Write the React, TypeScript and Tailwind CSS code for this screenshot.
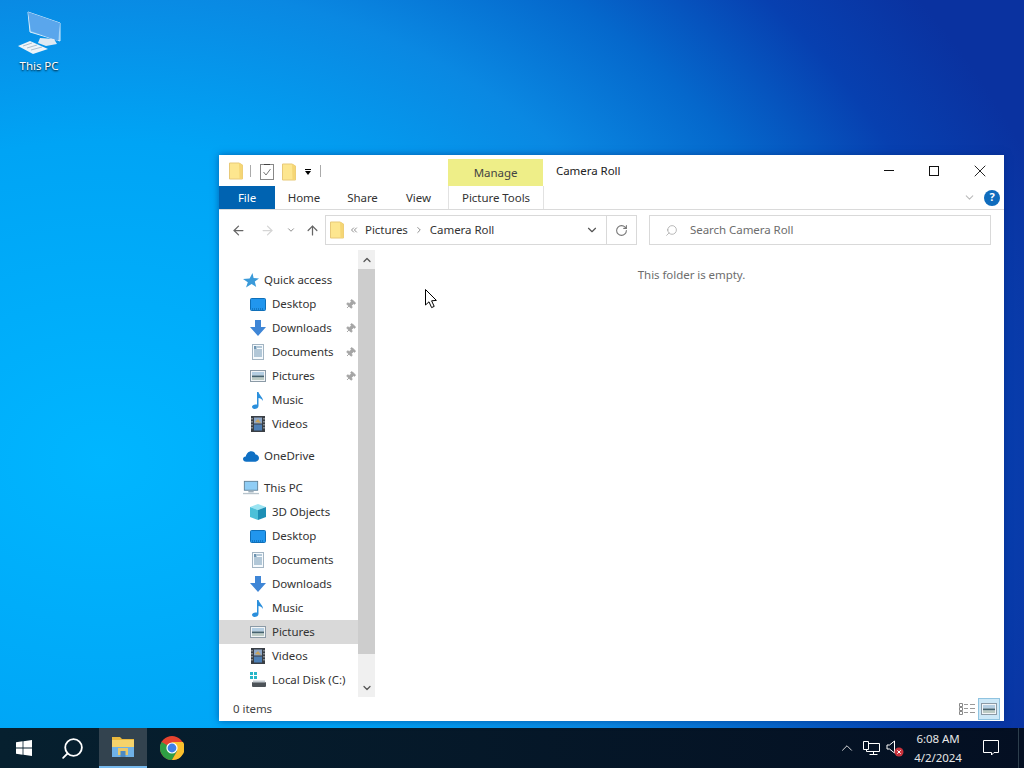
import React from "react";
import { ArrowLeft, ArrowRight, ArrowUp, ChevronDown, ChevronUp, ChevronsLeft, ChevronRight, RotateCw, Search, X, Pin } from "lucide-react";

// Small folder used in the title bar and the address bar
function FolderPage() {
    return (
        <svg width="16" height="18" viewBox="0 0 16 18">
            <path d="M1.5 1 H11 L14.5 3 V17 H1.5 Z" fill="#fde68f" stroke="#e8c978" />
            <path d="M11 1 L14.5 3 V17 H11.5 Z" fill="#f5d675" />
        </svg>
    );
}

function PropertiesIcon() {
    return (
        <svg width="14" height="16" viewBox="0 0 14 16">
            <rect x="0.5" y="0.5" width="13" height="15" fill="#fff" stroke="#888" />
            <path d="M3.5 8 L6 11 L10.5 5" fill="none" stroke="#777" />
            <path d="M4 0.5 H10" stroke="#444" />
        </svg>
    );
}

function DesktopIcon() {
    return (
        <svg width="16" height="13" viewBox="0 0 16 13">
            <rect x="0.5" y="0.5" width="15" height="12" rx="1" fill="#2196ee" stroke="#0f6fb8" />
            <path d="M2 11 H14" stroke="#0b5c9c" strokeDasharray="1 1" />
        </svg>
    );
}

function DownloadIcon() {
    return (
        <svg width="16" height="16" viewBox="0 0 16 16">
            <path d="M5 0 H11 V7 H16 L8 16 L0 7 H5 Z" fill="#3f86d6" />
        </svg>
    );
}

function DocumentIcon() {
    return (
        <svg width="12" height="16" viewBox="0 0 12 16">
            <rect x="0.5" y="0.5" width="11" height="15" fill="#f6fafd" stroke="#a3b5c3" />
            <path d="M5 3 H10 M2 6 H10 M2 8 H10 M2 10 H10 M2 12 H10" stroke="#6f95b2" />
            <rect x="2" y="2" width="2.5" height="3" fill="#6f95b2" />
        </svg>
    );
}

function PicturesIcon() {
    return (
        <svg width="16" height="12" viewBox="0 0 16 12">
            <rect x="0.5" y="0.5" width="15" height="11" fill="#f2f5f7" stroke="#8b9aa6" />
            <rect x="2" y="2" width="12" height="3.5" fill="#b4cee2" />
            <rect x="2" y="5.5" width="12" height="2" fill="#44626e" />
            <rect x="2" y="7.5" width="12" height="2.5" fill="#bccbc4" />
        </svg>
    );
}

function MusicIcon() {
    return (
        <svg width="12" height="17" viewBox="0 0 12 17">
            <path d="M5 0 H6.5 C7 3 11 5 11 9 C10 7 8 6 6.5 6 V14 C6.5 16 4.5 17 2.5 17 C1 17 0 16 0 14.8 C0 13 2.5 12 5 12.6 Z" fill="#2b8fdc" />
        </svg>
    );
}

function VideosIcon() {
    return (
        <svg width="14" height="16" viewBox="0 0 14 16">
            <rect width="14" height="16" fill="#3a3f45" />
            <rect x="3" y="1.5" width="8" height="6" fill="#8fa8c8" />
            <rect x="3" y="8.5" width="8" height="6" fill="#4d7fb5" />
            <path d="M4 6 L7 3 L10 7 Z" fill="#c9a35a" />
            <path d="M1 2 V14 M13 2 V14" stroke="#cfd4d8" strokeDasharray="1.5 1.5" />
        </svg>
    );
}

function StarIcon() {
    return (
        <svg width="16" height="15" viewBox="0 0 16 15">
            <path d="M9.5 0 L10.6 5 L16 5.4 L11.8 8.6 L13.2 14 L8.6 11 L3 14.6 L4.8 9.2 L0 6 L6.6 5.4 Z" fill="#3a9ad9" />
        </svg>
    );
}

function CloudIcon() {
    return (
        <svg width="17" height="11" viewBox="0 0 17 11">
            <path d="M3.5 11 C1.5 11 0 9.8 0 8.2 C0 6.6 1.4 5.4 3 5.5 C3.6 2.4 6 0 8.8 0 C11 0 12.6 1.2 13.4 3.4 C15.5 3.6 17 5.2 17 7.2 C17 9.4 15.4 11 13.2 11 Z" fill="#0f70c4" />
        </svg>
    );
}

function MonitorIcon() {
    return (
        <svg width="18" height="16" viewBox="0 0 18 16">
            <rect x="1.5" y="0.5" width="15" height="10" fill="#8fcdf5" stroke="#5d7f96" />
            <rect x="6" y="11" width="6" height="2" fill="#9fb0bc" />
            <rect x="0" y="13.5" width="18" height="1.5" fill="#b8c4cc" />
        </svg>
    );
}

function CubeIcon() {
    return (
        <svg width="16" height="16" viewBox="0 0 16 16">
            <path d="M8 0 L16 3 L8 6 L0 3 Z" fill="#9be4f2" />
            <path d="M0 3 L8 6 V16 L0 13 Z" fill="#4cc0d8" />
            <path d="M16 3 L8 6 V16 L16 13 Z" fill="#1d8fb5" />
        </svg>
    );
}

function DiskIcon() {
    return (
        <svg width="16" height="16" viewBox="0 0 16 16">
            <rect x="0" y="0" width="3" height="3" fill="#28b6c8" />
            <rect x="4" y="0" width="3" height="3" fill="#28b6c8" />
            <rect x="0" y="4" width="3" height="3" fill="#28b6c8" />
            <rect x="4" y="4" width="3" height="3" fill="#28b6c8" />
            <rect x="2" y="10" width="14" height="5" rx="1" fill="#4d5358" />
            <rect x="3" y="8.5" width="12" height="2" fill="#c5ccd1" />
        </svg>
    );
}

function WindowsLogo() {
    return (
        <svg width="16" height="16" viewBox="0 0 16 16" fill="#fff">
            <path d="M0 2.3 L6.6 1.3 V7.5 H0 Z M7.4 1.2 L16 0 V7.5 H7.4 Z M0 8.4 H6.6 V14.7 L0 13.7 Z M7.4 8.4 H16 V16 L7.4 14.8 Z" />
        </svg>
    );
}

function ChromeLogo() {
    return (
        <svg width="24" height="24" viewBox="0 0 24 24">
            <circle cx="12" cy="12" r="12" fill="#e5432f" />
            <path d="M12 12 L1.6 6 A12 12 0 0 0 12 24 L18 13.5 Z" fill="#2f9e44" />
            <path d="M12 6 H23 A12 12 0 0 1 12 24 L17.2 15 Z" fill="#fbc02d" />
            <circle cx="12" cy="12" r="5.6" fill="#fff" />
            <circle cx="12" cy="12" r="4.4" fill="#3f80e8" />
        </svg>
    );
}

function ExplorerLogo() {
    return (
        <svg width="22" height="20" viewBox="0 0 22 20">
            <path d="M0 0 H8 L10 2 H22 V7 H0 Z" fill="#e9b83e" />
            <rect y="3" width="22" height="9" fill="#f5d36b" />
            <rect y="10" width="22" height="10" fill="#6fb1e6" />
            <rect x="6" y="11" width="10" height="7" fill="#e9c86a" />
            <rect x="8.5" y="14" width="5" height="6" fill="#4c8ac4" />
        </svg>
    );
}

function PcDesktopIcon() {
    return (
        <svg width="46" height="44" viewBox="0 0 46 44">
            <path d="M12 2 L44 13 V31 L14 22 Z" fill="#7cc0f5" stroke="#d8ecfb" />
            <path d="M12 2 L44 13 L42 31 L15 21 Z" fill="#5aa6ec" />
            <path d="M24 28 L38 29 L41 34 L30 36 L22 33 Z" fill="#dfe9f2" />
            <path d="M2 36 L14 31 L32 39 L17 44 Z" fill="#eef4f9" />
            <path d="M7 36 L16 33 M11 38 L21 35 M15 40 L26 37" stroke="#aebfce" />
        </svg>
    );
}

function NavRow({ icon, label, pinned, indent, selected }: { icon: React.ReactNode; label: string; pinned?: boolean; indent?: boolean; selected?: boolean }) {
    return (
        <div className={`h-6 flex items-center pr-[2px] ${indent ? "pl-[31px]" : "pl-6"} ${selected ? "bg-[#d9d9d9]" : ""}`}>
            <span className={`w-4 flex justify-center shrink-0 ${indent ? "mr-[6px]" : "mr-[5px]"}`}>{icon}</span>
            <span className="flex-1 whitespace-nowrap">{label}</span>
            {pinned && <Pin size={11} className="text-[#a5a5a5] fill-[#a5a5a5] rotate-45" />}
        </div>
    );
}

export default function App() {
    return (
        <div className="relative w-[1024px] h-[768px] overflow-hidden font-['Noto_Sans',sans-serif] text-[11.5px] tracking-[-0.05px] text-[#333] bg-[radial-gradient(1000px_800px_at_10%_60%,#00b6ff_0%,#00a4f5_40%,#0a88e2_60%,#0568cc_74%,#0740b0_88%,#0a32a0_100%)] flex flex-col">
            {/* Desktop icon */}
            <div className="absolute left-[9px] top-[10px] w-[60px] flex flex-col items-center text-white [text-shadow:0_1px_2px_#000]">
                <PcDesktopIcon />
                <span className="leading-4 mt-[4px]">This PC</span>
            </div>

            {/* Explorer window */}
            <div className="absolute left-[219px] top-[155px] w-[785px] h-[566px] bg-white flex flex-col shadow-[0_0_7px_rgba(0,40,120,0.55)]">
                {/* Title bar */}
                <div className="h-[31px] flex items-stretch shrink-0">
                    <div className="w-[229px] flex items-center pl-[9px] pt-[1px]">
                        <FolderPage />
                        <span className="w-px h-3 bg-[#aaa] ml-[6px] mr-[9px]"></span>
                        <span className="mt-[2px]"><PropertiesIcon /></span>
                        <span className="ml-[7px] mt-[1px]"><FolderPage /></span>
                        <span className="ml-[8px] mt-[2px] flex flex-col items-center gap-[1px]">
                            <span className="w-[6px] h-px bg-black"></span>
                            <span className="w-0 h-0 border-x-[3px] border-x-transparent border-t-[4px] border-t-black"></span>
                        </span>
                        <span className="w-px h-3 bg-[#aaa] ml-[9px]"></span>
                    </div>
                    <div className="w-[95px] mt-1 bg-[#eeee88] flex items-center justify-center text-[#444]">Manage</div>
                    <div className="pl-[13px] flex items-center text-[#222]">Camera Roll</div>
                    <div className="ml-auto flex items-center text-[#111] pr-[1px]">
                        <div className="w-[45px] flex justify-center"><span className="w-[10px] h-px bg-[#111]"></span></div>
                        <div className="w-[46px] flex justify-center"><span className="w-[10px] h-[10px] border border-[#111]"></span></div>
                        <div className="w-[46px] flex justify-center"><X size={20} strokeWidth={1.1} /></div>
                    </div>
                </div>

                {/* Ribbon tabs */}
                <div className="h-[24px] flex items-stretch border-b border-[#dadada] shrink-0">
                    <div className="w-[56px] bg-[#0063b1] text-white flex items-center justify-center">File</div>
                    <div className="w-[58px] flex items-center justify-center">Home</div>
                    <div className="w-[59px] flex items-center justify-center">Share</div>
                    <div className="w-[53px] flex items-center justify-center">View</div>
                    <div className="w-[3px]"></div>
                    <div className="w-[96px] border-x border-[#e2e2e2] flex items-center justify-center">Picture Tools</div>
                    <div className="ml-auto flex items-center pr-[4px]">
                        <ChevronDown size={13} className="text-[#bbb] mr-[8px]" />
                        <span className="w-4 h-4 rounded-full bg-[#0f6cbd] text-white text-[11px] font-bold flex items-center justify-center">?</span>
                    </div>
                </div>

                {/* Address row */}
                <div className="h-[40px] flex items-center shrink-0">
                    <div className="w-[106px] flex items-center pl-[12px]">
                        <ArrowLeft size={15} className="text-[#666]" />
                        <ArrowRight size={15} className="text-[#d5d5d5] ml-[14px]" />
                        <ChevronDown size={10} className="text-[#777] ml-[11px]" />
                        <ArrowUp size={15} className="text-[#666] ml-[9px]" />
                    </div>
                    <div className="w-[312px] h-[30px] border border-[#d9d9d9] flex items-center">
                        <span className="ml-[3px]"><FolderPage /></span>
                        <ChevronsLeft size={10} className="text-[#777] ml-[4px]" />
                        <span className="ml-[6px]">Pictures</span>
                        <ChevronRight size={10} className="text-[#777] mx-[6px]" />
                        <span>Camera Roll</span>
                        <ChevronDown size={14} className="text-[#555] ml-auto mr-[7px]" />
                        <span className="w-[30px] h-full border-l border-[#d9d9d9] flex items-center justify-center">
                            <RotateCw size={13} className="text-[#777]" />
                        </span>
                    </div>
                    <div className="ml-[12px] w-[342px] h-[30px] border border-[#d9d9d9] flex items-center text-[#6d6d6d]">
                        <Search size={13} strokeWidth={1.25} className="ml-[15px] -scale-x-100 text-[#999]" />
                        <span className="ml-[12px]">Search Camera Roll</span>
                    </div>
                </div>

                {/* Body */}
                <div className="flex-1 flex min-h-0">
                    <div className="w-[139px] pt-[18px] text-[#333] shrink-0 overflow-hidden">
                        <NavRow icon={<StarIcon />} label="Quick access" />
                        <NavRow indent icon={<DesktopIcon />} label="Desktop" pinned />
                        <NavRow indent icon={<DownloadIcon />} label="Downloads" pinned />
                        <NavRow indent icon={<DocumentIcon />} label="Documents" pinned />
                        <NavRow indent icon={<PicturesIcon />} label="Pictures" pinned />
                        <NavRow indent icon={<MusicIcon />} label="Music" />
                        <NavRow indent icon={<VideosIcon />} label="Videos" />
                        <div className="h-2"></div>
                        <NavRow icon={<CloudIcon />} label="OneDrive" />
                        <div className="h-2"></div>
                        <NavRow icon={<MonitorIcon />} label="This PC" />
                        <NavRow indent icon={<CubeIcon />} label="3D Objects" />
                        <NavRow indent icon={<DesktopIcon />} label="Desktop" />
                        <NavRow indent icon={<DocumentIcon />} label="Documents" />
                        <NavRow indent icon={<DownloadIcon />} label="Downloads" />
                        <NavRow indent icon={<MusicIcon />} label="Music" />
                        <NavRow indent selected icon={<PicturesIcon />} label="Pictures" />
                        <NavRow indent icon={<VideosIcon />} label="Videos" />
                        <NavRow indent icon={<DiskIcon />} label="Local Disk (C:)" />
                    </div>
                    {/* Nav scrollbar */}
                    <div className="w-[17px] bg-[#f0f0f0] flex flex-col shrink-0">
                        <div className="h-[19px] flex items-center justify-center"><ChevronUp size={12} strokeWidth={2.5} className="text-[#555]" /></div>
                        <div className="h-[385px] bg-[#cdcdcd]"></div>
                        <div className="flex-1"></div>
                        <div className="h-[19px] flex items-center justify-center"><ChevronDown size={12} strokeWidth={2.5} className="text-[#555]" /></div>
                    </div>
                    {/* Empty folder */}
                    <div className="flex-1 flex justify-center pt-4 pl-1 text-[#6d6d6d]">
                        <span className="h-[18px]">This folder is empty.</span>
                    </div>
                </div>

                {/* Status bar */}
                <div className="h-6 flex items-center pl-[14px] shrink-0 text-[#444]">
                    <span>0 items</span>
                    <div className="ml-auto flex items-center pr-[4px]">
                        <svg width="16" height="12" viewBox="0 0 16 12" className="mr-[3px]">
                            <path d="M0.5 0.5 H3.5 V3.5 H0.5 Z M0.5 4.5 H3.5 V7.5 H0.5 Z M0.5 8.5 H3.5 V11.5 H0.5 Z" fill="none" stroke="#888" />
                            <path d="M5 1.5 H9 M11 1.5 H16 M5 5.5 H9 M11 5.5 H16 M5 9.5 H9 M11 9.5 H16" stroke="#999" />
                        </svg>
                        <div className="w-[22px] h-[22px] bg-[#cde8f7] border border-[#8fc3e0] flex items-center justify-center">
                            <PicturesIcon />
                        </div>
                    </div>
                </div>
            </div>

            {/* Mouse pointer */}
            <svg width="14" height="20" viewBox="0 0 14 20" className="absolute left-[425px] top-[289px]">
                <path d="M0.5 0.5 V16 L4 12.8 L6.6 18.6 L9.2 17.4 L6.6 11.8 L11.4 11.4 Z" fill="#fff" stroke="#000" />
            </svg>

            {/* Taskbar */}
            <div className="mt-auto h-10 bg-[linear-gradient(90deg,#06202f,#040f22)] flex items-stretch text-white">
                <div className="w-12 flex items-center justify-center"><WindowsLogo /></div>
                <div className="w-[51px] flex items-center justify-center pr-[2px]">
                    <Search size={25} strokeWidth={1.75} className="-scale-x-100" />
                </div>
                <div className="w-12 bg-[#33434f] border-b-2 border-[#76b9ed] flex items-center justify-center"><ExplorerLogo /></div>
                <div className="w-[50px] flex items-center justify-center"><ChromeLogo /></div>
                {/* Tray */}
                <div className="ml-auto flex items-stretch text-[#e6e6e6]">
                    <div className="w-6 flex items-center justify-center"><ChevronUp size={18} strokeWidth={1.25} /></div>
                    <div className="w-6 flex items-center justify-center">
                        <svg width="17" height="15" viewBox="0 0 17 15" fill="none" stroke="#fff">
                            <path d="M0.5 0.5 H5.5 V8.5 H0.5 Z M5.5 2.5 H16.5 V10.5 H3.5 V8.5 M10.5 10.5 V13.5 M6.5 13.5 H14.5" />
                        </svg>
                    </div>
                    <div className="w-6 flex items-center justify-center">
                        <svg width="18" height="18" viewBox="0 0 18 18">
                            <path d="M1 6 H3.5 L8.5 2 V14 L3.5 10 H1 Z" fill="none" stroke="#fff" />
                            <circle cx="13" cy="13" r="4.5" fill="#c8323c" />
                            <path d="M11.3 11.3 L14.7 14.7 M14.7 11.3 L11.3 14.7" stroke="#fff" />
                        </svg>
                    </div>
                    <div className="w-[62px] flex flex-col items-center justify-center leading-[19px] pb-px">
                        <span>6:08 AM</span>
                        <span>4/2/2024</span>
                    </div>
                    <div className="w-11 flex items-center justify-center">
                        <svg width="16" height="16" viewBox="0 0 16 16" fill="none" stroke="#fff">
                            <path d="M0.5 0.5 H15.5 V12.5 H11 L8.5 15 V12.5 H0.5 Z" />
                        </svg>
                    </div>
                    <div className="w-[11px] flex justify-center pr-[1px]"><span className="w-px h-full bg-[#2d3e4c]"></span></div>
                </div>
            </div>
        </div>
    );
}
